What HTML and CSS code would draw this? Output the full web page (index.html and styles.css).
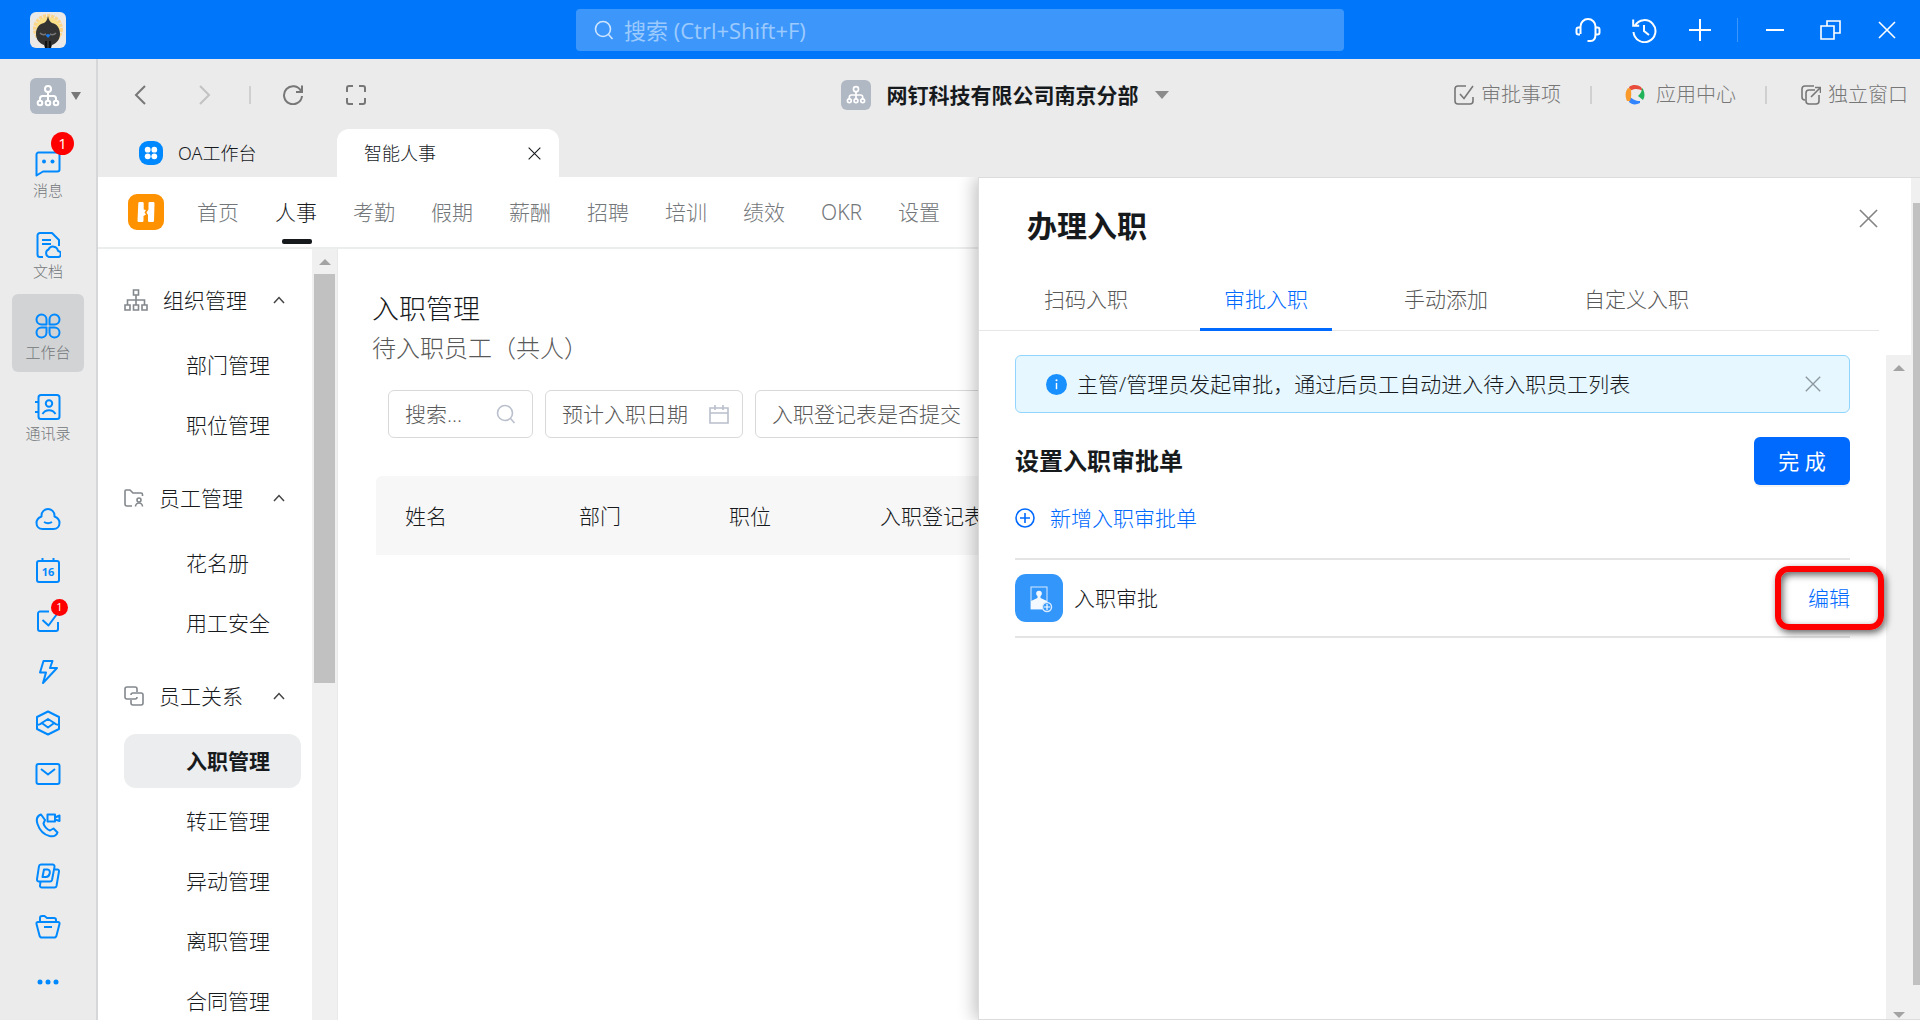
FILE: index.html
```html
<!DOCTYPE html>
<html lang="zh-CN">
<head>
<meta charset="utf-8">
<meta name="viewport" content="width=device-width, initial-scale=1">
<title>智能人事 - 办理入职</title>
<link rel="stylesheet" href="styles.css">
</head>
<body>
<svg class="defs" aria-hidden="true">
  <symbol id="org" viewBox="0 0 24 24"><g fill="none" stroke="currentColor" stroke-width="2"><circle cx="12" cy="5" r="3"/><path d="M12 8v4M4 17v-2.500a2.500 2.500 0 0 1 2.500-2.500h11a2.500 2.500 0 0 1 2.500 2.500V17M12 12v5"/><circle cx="4" cy="19" r="2.300"/><circle cx="12" cy="19" r="2.300"/><circle cx="20" cy="19" r="2.300"/></g></symbol>
  <symbol id="glass" viewBox="0 0 20 20"><g fill="none" stroke="currentColor" stroke-width="1.600"><circle cx="9" cy="9" r="7.500"/><path d="M14.500 14.500 18.500 19"/></g></symbol>
  <symbol id="cross" viewBox="0 0 20 20"><path d="M1 1l18 18M19 1 1 19" fill="none" stroke="currentColor" stroke-width="1.700"/></symbol>
  <symbol id="up" viewBox="0 0 12 8"><path d="M1 7l5-5.500L11 7" fill="none" stroke="currentColor" stroke-width="1.500"/></symbol>
</svg>
<div class="app">
  <header class="titlebar">
    <div class="avatar"><svg viewBox="0 0 36 36"><rect width="36" height="36" rx="6" fill="#ebe9e8"/><circle cx="18" cy="17" r="13" fill="none" stroke="#fbd58a" stroke-width="4" stroke-dasharray="3 1"/><circle cx="18" cy="17" r="12" fill="#fbe08a"/><path d="M18 4c1 4 2 6 4 7 5 1 8 5 8 11 0 5-3 9-8 11l-1 3h-6l-1-3c-5-2-8-6-8-11 0-6 3-10 8-11 2-1 3-3 4-7z" fill="#333"/><path d="M10 21c2 2 4 2 6 1M20 22c2 1 4 1 6-1" stroke="#777" stroke-width="1.500" fill="none"/><path d="M15.500 23l2.500-1 2.500 1-2.500 3z" fill="#1c7df0"/><path d="M16 29v7M20 29v7" stroke="#111" stroke-width="2"/></svg></div>
    <label class="search"><svg class="i20"><use href="#glass"/></svg><input type="text" placeholder="搜索 (Ctrl+Shift+F)" aria-label="搜索"></label>
    <div class="winbtns">
      <button aria-label="客服"><svg viewBox="0 0 26 26"><g fill="none" stroke="#fff" stroke-width="2"><path d="M5.500 17V9.500a7.500 7.500 0 0 1 15 0V17c0 4.500-2 7-5 7h-3"/><path d="M5 10.500H3.500a2 2 0 0 0-2 2v3a2 2 0 0 0 2 2H5M21 10.500h1.500a2 2 0 0 1 2 2v3a2 2 0 0 1-2 2H21"/></g></svg></button>
      <button aria-label="历史"><svg viewBox="0 0 26 26"><g fill="none" stroke="#fff" stroke-width="2"><path d="M4 8.500A11 11 0 1 1 2.500 15M2.200 2.500v6.300h6M13 8v6l5 4"/></g></svg></button>
      <button aria-label="新建"><svg viewBox="0 0 26 26"><path d="M13 2v22M2 13h22" stroke="#fff" stroke-width="2"/></svg></button>
      <span class="vbar"></span>
      <button aria-label="最小化"><svg viewBox="0 0 26 26"><path d="M4 13h18" stroke="#fff" stroke-width="2"/></svg></button>
      <button aria-label="还原"><svg viewBox="0 0 26 26"><path d="M3 9h13v13H3zM9 9V4h13v12h-6" stroke="#fff" stroke-width="1.600" fill="none"/></svg></button>
      <button aria-label="关闭"><svg viewBox="0 0 26 26"><path d="M5 5l16 16M21 5 5 21" stroke="#fff" stroke-width="1.600"/></svg></button>
    </div>
  </header>

  <aside class="rail">
    <button class="org" aria-label="切换组织"><span class="orgbox"><svg><use href="#org"/></svg></span><span class="caret"></span></button>
    <nav class="railmain">
      <a href="#"><span class="ico"><svg viewBox="0 0 26 26"><path d="M1.500 24.500V3.500a2 2 0 0 1 2-2h19a2 2 0 0 1 2 2v15a2 2 0 0 1-2 2H8z"/><circle class="f" cx="9" cy="10.500" r="2"/><circle class="f" cx="17.500" cy="10.500" r="2"/></svg><b class="badge">1</b></span>消息</a>
      <a href="#"><span class="ico"><svg viewBox="0 0 26 26"><path d="M8 25H5a2.500 2.500 0 0 1-2.500-2.500v-19A2.500 2.500 0 0 1 5 1h12l7 7v6M7 8h9M7 12h9"/><path d="M14 25h8.500a3 3 0 0 0 .5-6 5 5 0 0 0-9.500-1.500A4 4 0 0 0 14 25z"/></svg></span>文档</a>
      <a href="#" class="on"><span class="ico"><svg viewBox="0 0 26 26"><path d="M6.500 1.500a5 5 0 1 0 0 10h5v-5a5 5 0 0 0-5-5zM19.500 1.500a5 5 0 1 1 0 10h-5v-5a5 5 0 0 1 5-5zM6.500 24.500a5 5 0 1 1 0-10h5v5a5 5 0 0 1-5 5zM19.500 24.500a5 5 0 1 0 0-10h-5v5a5 5 0 0 0 5 5z"/></svg></span>工作台</a>
      <a href="#"><span class="ico"><svg viewBox="0 0 26 26"><rect x="3.500" y="1" width="21" height="24" rx="2.500"/><circle cx="14" cy="9.500" r="3.200"/><path d="M7.500 20c3-5 10-5 13 0M0 8h4M0 18h4"/></svg></span>通讯录</a>
    </nav>
    <nav class="railmini">
      <a href="#" aria-label="云盘"><svg viewBox="0 0 26 26"><path d="M6.500 10.500V9.500a6.500 6.500 0 0 1 13 0v1c3 1.200 5 3.500 5 6.500 0 3.500-2.500 6-6 6h-11c-3.500 0-6-2.500-6-6 0-3 2-5.300 5-6.500zM9 16c2.500 1.500 5.500 1.500 8 0"/></svg></a>
      <a href="#" aria-label="日历"><svg viewBox="0 0 26 26"><rect x="2" y="4" width="22" height="21" rx="2"/><path d="M7.500 1v4M18.500 1v4"/><text x="13" y="19" text-anchor="middle">16</text></svg></a>
      <a href="#" aria-label="待办"><svg viewBox="0 0 26 26"><path d="M14 3.500H5a2 2 0 0 0-2 2V21a2 2 0 0 0 2 2h16a2 2 0 0 0 2-2v-7M7.500 12l6 5.500L22 6"/></svg><b class="badge small">1</b></a>
      <a href="#" aria-label="闪电"><svg viewBox="0 0 26 26"><path d="M8.500 2h9L15 9h7L8 24l3-10.500H5z"/></svg></a>
      <a href="#" aria-label="应用"><svg viewBox="0 0 26 26"><path d="M13 1.500 24 7v12L13 24.500 2 19V7zM2 15c3 0 4-1 5.500-2.500L13 9l5.500 3.500C20 14 21 15 24 15M7.500 13.500 13 17.500l5.500-4"/></svg></a>
      <a href="#" aria-label="邮箱"><svg viewBox="0 0 26 26"><rect x="1.500" y="3" width="23" height="20" rx="2"/><path d="M6 8l7 5.500L20 8"/></svg></a>
      <a href="#" aria-label="会议"><svg viewBox="0 0 26 26"><path d="M6 2.500C2 4 1 7.500 2.500 12c2 6 6 10.500 12 12 4 .8 7-.5 8-3.500l-4-4-3.500 2C12 17.500 9 14 8.500 11.500L10 8zM12.500 2.500H20v7h-7.500zM20 5.500l4.500-2v5.500L20 7.500"/></svg></a>
      <a href="#" aria-label="文档库"><svg viewBox="0 0 26 26"><path d="M6 1.500h11.500a2 2 0 0 1 2 2.400L17 17a2 2 0 0 1-2 1.500H4a2 2 0 0 1-2-2.400L4 3.200A2 2 0 0 1 6 1.500zM20 6.500h2.500a1.500 1.500 0 0 1 1.500 1.800l-2.500 14.700a2 2 0 0 1-2 1.500H7a2 2 0 0 1-2-2.500l.5-3"/><path d="M9 6.500h3.500c4 0 2.500 7.500-1.500 7.500H7.500z"/></svg></a>
      <a href="#" aria-label="文件"><svg viewBox="0 0 26 26"><path d="M3 8h20a1.500 1.500 0 0 1 1.500 2l-3 11.500a2.500 2.500 0 0 1-2.500 2H7a2.500 2.500 0 0 1-2.500-2L1.500 10A1.500 1.500 0 0 1 3 8zM5 8V4a2 2 0 0 1 2-2h2.500L12 4h7a2 2 0 0 1 2 2v2M9 13h8"/></svg></a>
      <a href="#" aria-label="更多"><svg viewBox="0 0 26 26"><circle class="f" cx="5" cy="17" r="2.500"/><circle class="f" cx="13" cy="17" r="2.500"/><circle class="f" cx="21" cy="17" r="2.500"/></svg></a>
    </nav>
  </aside>

  <div class="work">
    <div class="toolbar">
      <div class="hist">
        <button aria-label="后退"><svg viewBox="0 0 20 20"><path d="M14 1 5 10l9 9"/></svg></button>
        <button class="dim" aria-label="前进"><svg viewBox="0 0 20 20"><path d="M6 1l9 9-9 9"/></svg></button>
        <span class="vbar"></span>
        <button aria-label="刷新"><svg viewBox="0 0 20 20"><path d="M18 6A9 9 0 1 0 19 11M19 .5V7h-6"/></svg></button>
        <button aria-label="全屏"><svg viewBox="0 0 20 20"><path d="M1 7V3a2 2 0 0 1 2-2h4M13 1h4a2 2 0 0 1 2 2v4M19 13v4a2 2 0 0 1-2 2h-4M7 19H3a2 2 0 0 1-2-2v-4"/></svg></button>
      </div>
      <button class="company"><span class="orgbox sm"><svg><use href="#org"/></svg></span>网钉科技有限公司南京分部<span class="caret wide"></span></button>
      <div class="links">
        <a href="#"><svg viewBox="0 0 20 20"><path d="M12 1H4a3 3 0 0 0-3 3v12a3 3 0 0 0 3 3h12a3 3 0 0 0 3-3v-4M6 9l4 4.500L19 1"/></svg>审批事项</a>
        <span class="vbar"></span>
        <a href="#" class="center"><svg viewBox="0 0 20 20"><g stroke="none"><path d="M4 2c4-3 9-2 12 0l2 4c-4-2-8-3-13 0z" fill="#e84c3d"/><path d="M18 4c2 4 2 8 0 11l-5-4c2-2 4-4 4-8z" fill="#21b35a"/><path d="M15 18c-4 2-8 2-11-1l1-5c3 2 5 4 10 4z" fill="#3385ff"/><path d="M2 16C0 11 0 7 3 3l3 1c0 4 1 7-1 12z" fill="#f99a2b"/></g></svg>应用中心</a>
        <span class="vbar"></span>
        <a href="#" class="out"><svg viewBox="0 0 20 20"><path d="M13 1H4a3 3 0 0 0-3 3v8a3 3 0 0 0 3 3M14 5H8a3 3 0 0 0-3 3v8a3 3 0 0 0 3 3h7a3 3 0 0 0 3-3v-6M10 12l9-9M14 2.500h5.500V8"/></svg>独立窗口</a>
      </div>
    </div>
    <div class="tabs">
      <a href="#" class="tab latin"><svg class="i24" viewBox="0 0 24 24"><rect width="24" height="24" rx="9" fill="#0089ff"/><g fill="#fff"><circle cx="8.700" cy="8.700" r="2.900"/><circle cx="15.300" cy="8.700" r="2.900"/><circle cx="8.700" cy="15.300" r="2.900"/><circle cx="15.300" cy="15.300" r="2.900"/></g></svg>OA工作台</a>
      <div class="tab on">智能人事<button aria-label="关闭标签"><svg><use href="#cross"/></svg></button></div>
    </div>

    <div class="page">
      <nav class="appnav">
        <svg class="logo" viewBox="0 0 36 36"><rect width="36" height="36" rx="9" fill="#ff9200"/><path d="M11.500 8h3q1.200 0 1.200 1.200v6.300L18 16l-1.500 2.500L18 20.500l-2.500 1.500v4.800q0 1.200-1.200 1.200h-3.600q-1.200 0-1.200-1.200L10.300 9.200Q10.300 8 11.500 8zM21.700 8h3.600q1.200 0 1.200 1.200l-.5 17.600q0 1.200-1.200 1.200h-3.600Q20 28 20 26.800V21l-1.500-2.500 2-3V9.200Q20.500 8 21.700 8z" fill="#fff"/></svg>
        <a href="#">首页</a><a href="#" class="on">人事</a><a href="#">考勤</a><a href="#">假期</a><a href="#">薪酬</a><a href="#">招聘</a><a href="#">培训</a><a href="#">绩效</a><a href="#" class="latin">OKR</a><a href="#">设置</a>
      </nav>
      <div class="body">
        <nav class="menu">
          <button class="group"><svg class="i24" viewBox="0 0 24 24"><path d="M9.500 2h5v5h-5zM1 17h5v5H1zM9.500 17h5v5h-5zM18 17h5v5h-5zM12 7v10M3.500 17v-5h17v5"/></svg>组织管理<svg class="chev"><use href="#up"/></svg></button>
          <a href="#">部门管理</a>
          <a href="#">职位管理</a>
          <button class="group"><svg class="i20" viewBox="0 0 20 20"><path d="M8 18H3a2 2 0 0 1-2-2V3a1 1 0 0 1 1-1h4l3 3h8a1.500 1.500 0 0 1 1.500 1.500V8"/><circle cx="15" cy="12" r="2"/><path d="M11.500 18.500a3.500 3.500 0 0 1 7 0"/></svg>员工管理<svg class="chev"><use href="#up"/></svg></button>
          <a href="#">花名册</a>
          <a href="#">用工安全</a>
          <button class="group"><svg class="i20" viewBox="0 0 20 20"><path d="M13 6V3a2 2 0 0 0-2-2H3a2 2 0 0 0-2 2v8a2 2 0 0 0 2 2h8a2 2 0 0 0 2-2"/><path d="M7 14v3a2 2 0 0 0 2 2h8a2 2 0 0 0 2-2V9a2 2 0 0 0-2-2H9a2 2 0 0 0-2 2"/></svg>员工关系<svg class="chev"><use href="#up"/></svg></button>
          <a href="#" class="on">入职管理</a>
          <a href="#">转正管理</a>
          <a href="#">异动管理</a>
          <a href="#">离职管理</a>
          <a href="#">合同管理</a>
        </nav>
        <div class="scroll"><span class="arrow"></span><span class="thumb"></span></div>
        <main class="main">
          <h1>入职管理</h1>
          <p class="sub">待入职员工（共人）</p>
          <div class="filters">
            <label class="field f1"><input type="text" placeholder="搜索..." aria-label="搜索员工"><svg class="i20"><use href="#glass"/></svg></label>
            <label class="field f2"><input type="text" placeholder="预计入职日期" aria-label="预计入职日期"><svg class="i20" viewBox="0 0 20 20"><path d="M1 4h18v15H1zM1 9h18M6 1v5M14 1v5"/></svg></label>
            <button class="field f3">入职登记表是否提交</button>
          </div>
          <table class="grid"><thead><tr><th class="c1">姓名</th><th class="c2">部门</th><th class="c3">职位</th><th>入职登记表</th></tr></thead></table>
        </main>
      </div>

      <section class="drawer">
        <div class="sheet">
          <div class="head"><h2>办理入职</h2><button aria-label="关闭"><svg><use href="#cross"/></svg></button></div>
          <nav class="dtabs"><a href="#">扫码入职</a><a href="#" class="on">审批入职</a><a href="#">手动添加</a><a href="#">自定义入职</a></nav>
          <div class="dbody">
            <div class="content">
              <div class="alert"><svg class="info" viewBox="0 0 20 20"><circle cx="10" cy="10" r="10" fill="#1890ff"/><circle cx="10" cy="6" r="1" fill="#fff"/><path d="M10 8.500v6" stroke="#fff" stroke-width="1.400"/></svg><span>主管/管理员发起审批，通过后员工自动进入待入职员工列表</span><button aria-label="关闭提示"><svg><use href="#cross"/></svg></button></div>
              <div class="row top"><h3>设置入职审批单</h3><button class="primary">完 成</button></div>
              <a href="#" class="add"><svg class="i20" viewBox="0 0 20 20"><circle cx="10" cy="10" r="9"/><path d="M10 5v10M5 10h10"/></svg>新增入职审批单</a>
              <div class="row item">
                <svg class="appico" viewBox="0 0 48 48"><rect width="48" height="48" rx="11" fill="#3296fa"/><rect x="16" y="13" width="16" height="22" fill="none" stroke="#d8eaff" stroke-width="1"/><circle cx="24" cy="19.500" r="2.800" fill="#f4f9ff"/><path d="M22.500 20h3v4l6.500 3v8H16v-8l6.500-3z" fill="#f4f9ff"/><circle cx="32" cy="33" r="4.500" fill="#3296fa" stroke="#d8eaff" stroke-width="1.500"/><path d="M32 30v6M29 33h6" stroke="#fff" stroke-width="1.200"/></svg>
                <span>入职审批</span><a href="#" class="edit">编辑</a>
              </div>
            </div>
            <div class="scroll plain"><span class="arrow"></span><span class="arrow down"></span></div>
          </div>
        </div>
        <div class="scroll outer"><span class="thumb"></span></div>
      </section>
    </div>
  </div>
</div>
</body>
</html>
```

FILE: styles.css
```css
* { box-sizing: border-box; }
body {
  margin: 0;
  font-family: "Open Sans", "Noto Sans CJK SC", sans-serif;
  font-size: 21px;
  font-weight: 300;
  line-height: 30px;
  color: #171a1d;
  background: #ebebeb;
}
a { color: inherit; text-decoration: none; }
button, input { font: inherit; color: inherit; border: 0; background: none; padding: 0; margin: 0; }
h1, h2, h3, p { margin: 0; }
svg { display: block; flex: none; }
.defs { position: absolute; width: 0; height: 0; }
.i20 { width: 20px; height: 20px; }
.i24 { width: 24px; height: 24px; }
.latin { font-family: "Noto Sans", "Noto Sans CJK SC", sans-serif; }

.app {
  display: grid;
  grid-template: 59px 1fr / 98px 1fr;
  height: 100vh;
  overflow: hidden;
}

/* title bar */
.titlebar {
  grid-column: 1 / -1;
  display: grid;
  grid-template-columns: 1fr 40vw 1fr;
  align-items: center;
  padding: 0 20px;
  background: #0077fa;
}
.avatar { padding-left: 10px; }
.avatar svg { width: 36px; height: 36px; }
.search {
  display: flex;
  align-items: center;
  gap: 10px;
  height: 42px;
  padding-left: 18px;
  border-radius: 4px;
  background: #3d97fb;
  color: #d0e5fe;
}
.search input { flex: 1; min-width: 0; font-size: 22px; line-height: 28px; font-weight: 400; outline: 0; }
.search input::placeholder { color: #9ccafd; }
.winbtns { display: flex; align-items: center; justify-content: flex-end; gap: 30px; }
.winbtns svg { width: 26px; height: 26px; }
.winbtns .vbar { width: 1px; height: 24px; margin: 0 -6px; background: #3d97fb; }
.vbar { width: 2px; height: 18px; background: #d0d0d0; }

/* far-left rail */
.rail { border-right: 2px solid #d6d7d8; padding-top: 19px; color: #73777a; }
.org { display: flex; align-items: center; gap: 5px; margin-left: 30px; }
.orgbox { display: grid; place-items: center; width: 36px; height: 36px; border-radius: 6px; background: #b0b8c3; color: #fff; }
.orgbox svg { width: 24px; height: 24px; }
.orgbox.sm { width: 30px; height: 30px; }
.orgbox.sm svg { width: 20px; height: 20px; }
.caret { border: 5px solid transparent; border-top: 8px solid #777; border-bottom: 0; }
.caret.wide { border-width: 8px 7px 0; border-top-color: #8b8b8b; }
.railmain { display: grid; gap: 3px; padding: 18px 12px 40px; }
.railmain a {
  display: flex; flex-direction: column; align-items: center; gap: 2px;
  height: 78px; padding-top: 19px;
  border-radius: 6px;
  font-size: 15px; line-height: 22px;
}
.railmain a.on { background: #d1d3d5; }
.ico { position: relative; }
.rail nav svg { width: 26px; height: 26px; fill: none; stroke: #0089ff; stroke-width: 2; stroke-linejoin: round; }
.rail nav svg .f { fill: #0089ff; stroke: none; }
.rail nav text { fill: #0089ff; stroke: none; font: 700 11px "Open Sans", sans-serif; }
.badge {
  position: absolute; top: -19px; left: 16px;
  width: 23px; height: 23px;
  border-radius: 50%;
  background: #f00; color: #fff;
  font-size: 15px; font-weight: 400; line-height: 22px; text-align: center;
}
.badge.small { top: 4px; left: 51px; width: 17px; height: 17px; font-size: 11px; line-height: 16px; }
.railmini a { position: relative; display: grid; place-items: center; height: 51px; }

/* toolbar and tabs */
.work { display: grid; grid-template-rows: 70px 48px 1fr; min-width: 0; min-height: 0; }
.toolbar { display: grid; grid-template-columns: 1fr auto 1fr; align-items: center; padding: 2px 12px 0 3px; }
.toolbar svg, .menu .group svg, .field svg, .add svg { fill: none; stroke: currentColor; stroke-width: 1.600; }
.hist { display: flex; align-items: center; margin-left: 30px; color: #777; gap: 43px; }
.hist svg { width: 20px; height: 20px; stroke-width: 2; }
.hist .dim { color: #c2c2c2; }
.hist .vbar { margin: 0 -11px 0 -8px; }
.company { display: flex; align-items: center; gap: 16px; font-weight: 700; }
.links { display: flex; align-items: center; justify-content: flex-end; gap: 29px; font-size: 20px; color: #777; }
.links a { display: flex; align-items: center; gap: 7px; }
.links a.center { gap: 11px; padding-left: 4px; }
.links a.out { padding-left: 5px; }
.links svg { width: 20px; height: 20px; }
.tabs { display: flex; }
.tab { display: flex; align-items: center; gap: 15px; width: 239px; padding-left: 41px; font-size: 18px; }
.tab.on { width: 222px; justify-content: space-between; padding: 0 18px 0 27px; background: #fff; border-radius: 12px 12px 0 0; }
.tab button svg { width: 13px; height: 13px; }

/* application area */
.page { position: relative; display: flex; flex-direction: column; min-height: 0; background: #fff; }
.appnav { display: flex; align-items: center; gap: 36px; height: 72px; padding-left: 30px; border-bottom: 2px solid #eceded; color: #73777a; }
.logo { width: 36px; height: 36px; margin-right: -3px; }
.appnav a { position: relative; line-height: 66px; }
.appnav a.on { color: #171a1d; }
.appnav a.on::after { content: ""; position: absolute; left: 7px; right: 5px; bottom: 1px; height: 5px; border-radius: 2px; background: #171a1d; }
.body { flex: 1; display: flex; min-height: 0; }
.menu { flex: none; width: 214px; padding: 24px 11px 0 26px; overflow: hidden; }
.menu .group { display: flex; align-items: center; gap: 15px; width: 100%; height: 54px; margin-bottom: 11px; }
.menu .group svg { color: #83888d; }
.menu a + .group { margin-top: 19px; }
.menu .group .chev { width: 12px; height: 8px; margin: 0 16px 0 auto; color: #444; }
.menu a { display: block; height: 54px; padding-left: 62px; margin-bottom: 6px; border-radius: 12px; line-height: 54px; }
.menu a.on { background: #ecedee; font-weight: 700; }
.scroll { flex: none; display: flex; flex-direction: column; align-items: center; width: 25px; background: #f0f0f0; }
.scroll .arrow { margin: 10px 0 9px; border: 6px solid transparent; border-bottom-color: #a3a3a3; border-top: 0; }
.scroll .arrow.down { margin: auto 0 1px; border: 6px solid transparent; border-top-color: #a3a3a3; border-bottom: 0; }
.scroll .thumb { width: 21px; height: 53%; background: #c1c1c1; }

.main { flex: 1; min-width: 0; padding: 40px 0 0 34px; border-left: 1px solid #e9e9e9; overflow: hidden; white-space: nowrap; }
.main h1 { font-size: 27px; line-height: 40px; font-weight: 300; }
.sub { font-size: 24px; line-height: 38px; color: #595959; }
.filters { display: flex; gap: 12px; margin: 23px 0 38px 16px; }
.field { flex: none; display: flex; align-items: center; justify-content: space-between; height: 48px; padding: 0 16px; border: 1px solid #d9d9d9; border-radius: 6px; color: #b9bfcc; }
.field input { flex: 1; min-width: 0; outline: 0; }
.field input::placeholder { color: #595959; }
.f1 { width: 145px; }
.f2 { width: 198px; padding-right: 13px; }
.f3 { width: 240px; color: #595959; }
.grid { width: 100%; margin-left: 4px; border-collapse: collapse; background: #f7f7f7; border-radius: 6px 0 0 0; }
.grid th { height: 79px; padding: 0; font-weight: 300; text-align: left; }
.grid .c1 { width: 203px; padding-left: 29px; }
.grid .c2 { width: 150px; }
.grid .c3 { width: 151px; }

/* drawer */
.drawer {
  position: absolute; top: 0; right: 0; bottom: 0;
  display: flex;
  width: 942px;
  border: 1px solid #dcdcdc; border-right: 0;
  background: #fff;
  box-shadow: -4px 0 16px rgba(0, 0, 0, .24);
  clip-path: inset(0 0 0 -30px);
}
.sheet { flex: 1; display: flex; flex-direction: column; min-width: 0; }
.head { display: flex; justify-content: space-between; align-items: center; height: 95px; padding: 0 33px 0 48px; }
.head h2 { font-size: 30px; line-height: 44px; }
.head button { margin-bottom: 14px; color: #848484; }
.head button svg { width: 19px; height: 19px; }
.dtabs { display: flex; gap: 48px; margin-right: 32px; padding: 0 41px; height: 58px; border-bottom: 1px solid #e6e6e6; color: #595959; }
.dtabs a { height: 58px; padding: 0 24px; line-height: 52px; }
.dtabs a.on { color: #006aff; border-bottom: 3px solid #006aff; }
.dbody { flex: 1; display: flex; justify-content: space-between; padding-top: 24px; }
.content { flex: 1; padding: 0 36px; }
.alert { display: flex; align-items: center; height: 58px; padding: 0 28px 0 30px; border: 1px solid #91d5ff; border-radius: 6px; background: #e6f7ff; }
.info { width: 21px; height: 21px; margin-right: 10px; }
.alert button { margin-left: auto; color: #8c979d; }
.alert button svg { width: 16px; height: 16px; }
.row { display: flex; align-items: center; }
.top { justify-content: space-between; margin: 24px 0 18px; }
h3 { font-size: 24px; line-height: 36px; }
.primary { width: 96px; height: 48px; border-radius: 6px; background: #006aff; color: #fff; font-weight: 400; box-shadow: 0 2px 0 #f3f3f3; }
.add { display: flex; align-items: center; gap: 15px; color: #006aff; }
.item { gap: 11px; height: 80px; margin-top: 25px; border: solid #e4e4e4; border-width: 2px 0; }
.appico { width: 48px; height: 48px; }
.edit {
  position: relative;
  margin-left: auto;
  color: #006aff;
}
.edit::before {
  content: "";
  position: absolute; inset: -17px -34px -17px -33px;
  border: 6px solid #f00; border-radius: 14px;
  box-shadow: 2px 3px 7px rgba(0, 0, 0, .6), inset 2px 3px 7px rgba(0, 0, 0, .6);
}
.plain { justify-content: space-between; }
.outer { width: 9px; padding: 25px 0 34px 2px; }
.outer .thumb { width: 7px; height: 100%; }
```
